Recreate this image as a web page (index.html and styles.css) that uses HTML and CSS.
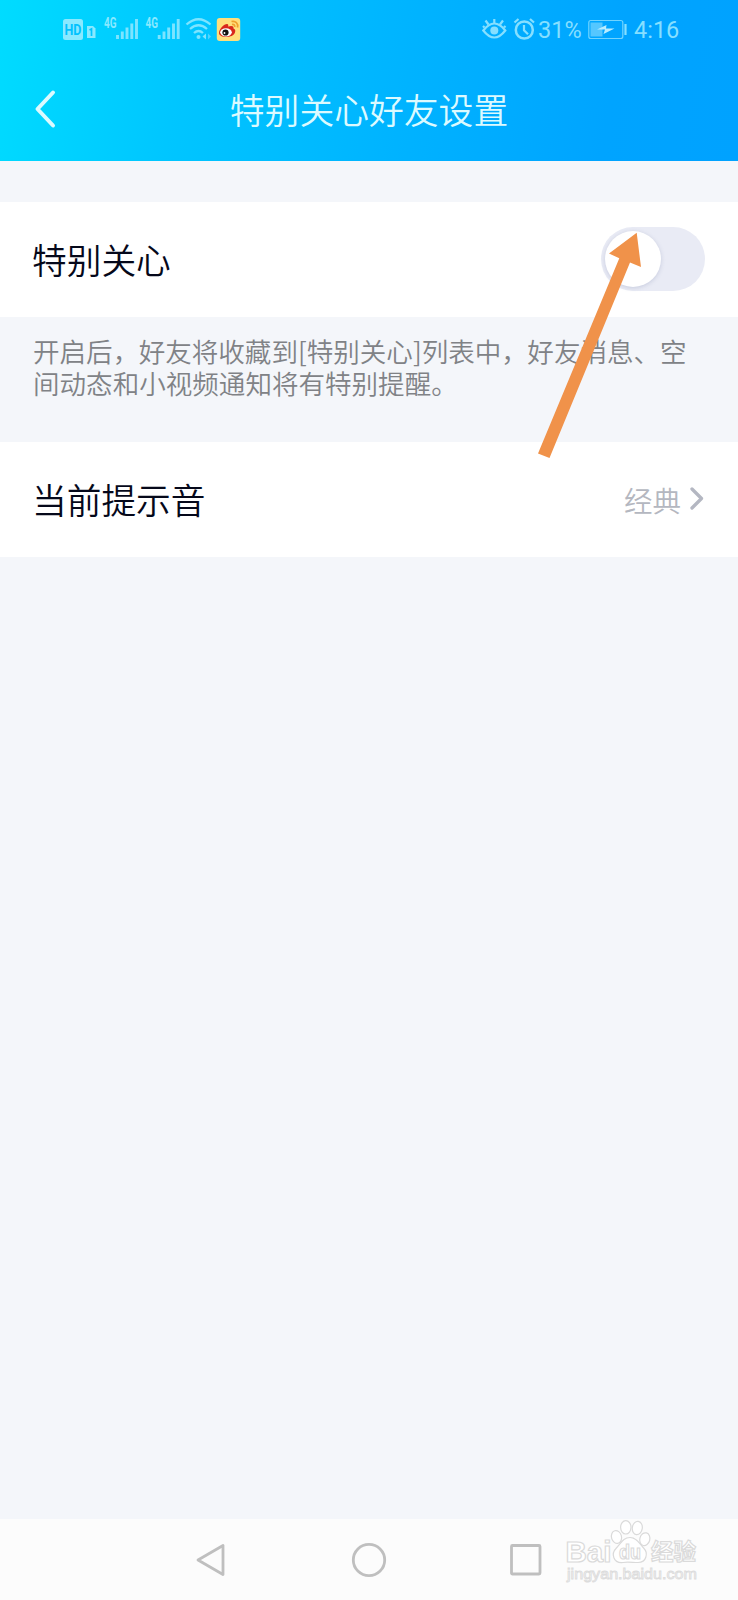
FILE: index.html
```html
<!DOCTYPE html>
<html lang="zh-CN">
<head>
<meta charset="utf-8">
<title>特别关心好友设置</title>
<link rel="stylesheet" href="styles.css">
</head>
<body>
<div class="screen">
  <header class="header">
    <div class="status">
      <svg class="status-left" width="180" height="28" viewBox="62 15 180 28">
        <rect x="63" y="19" width="20" height="21" rx="2.5" fill="#8ae9ff"/>
        <text x="73" y="34.500" class="hd" textLength="17" lengthAdjust="spacingAndGlyphs">HD</text>
        <path d="M87 26h6l2.500 2.500V38h-8.500z" fill="#8ae9ff"/>
        <path d="M89.500 30l2-1v7" fill="none" stroke="#00c5ff" stroke-width="1.700"/>
        <text x="104" y="28" class="net" textLength="12.500" lengthAdjust="spacingAndGlyphs">4G</text>
        <path d="M117.500 39v-4M122.300 39v-7.500M127 39v-11.500M131.800 39v-15.500M136.500 39v-20" class="bars"/>
        <text x="145.500" y="28" class="net" textLength="12.500" lengthAdjust="spacingAndGlyphs">4G</text>
        <path d="M159.200 39v-4M164 39v-7.500M168.700 39v-11.500M173.500 39v-15.500M178.200 39v-20" class="bars"/>
        <g fill="none" stroke="#7de4ff" stroke-width="2.300">
          <path d="M186.500 24.500q12-10.500 24 0M190 29q8.500-7.500 17 0M194 33q4.500-4 9 0"/>
        </g>
        <circle cx="198.500" cy="37" r="2" fill="#7de4ff"/>
        <path d="M206 33.500v6l-3.500-3z" fill="#7de4ff"/>
        <path d="M208 33.500v6l3-3z" fill="#4fd3ff"/>
        <rect x="216.800" y="18" width="23.400" height="23" rx="3" fill="#ffdf7c"/>
        <path d="M219 33c0-4 5-9 8-9 1.500 0 1.500 1.500 1 2.500 3-1 6-1 5.500 2 2 .7 2 2 1.500 4-1 3-5 4.500-8.500 4.500-4 0-7.500-1.500-7.500-4z" fill="#d9281c"/>
        <ellipse cx="226" cy="32.300" rx="5.800" ry="4.100" fill="#fff"/>
        <circle cx="225.500" cy="32.500" r="3.100" fill="#111"/>
        <circle cx="224.500" cy="33" r=".9" fill="#fff"/>
        <path d="M231.500 21.500c4-1 7 2 6 6M232 24.500c2-.3 3 .7 2.700 2.500" fill="none" stroke="#f0a02c" stroke-width="1.700"/>
      </svg>
      <div class="status-right">
        <svg width="54" height="26" viewBox="482 16 54 26" fill="none" stroke="#86dfff" stroke-width="2.200">
          <path d="M483.300 30.500q11-14 22 0q-11 14-22 0z"/>
          <circle cx="494.300" cy="30.500" r="4" fill="#86dfff" stroke="none"/>
          <path d="M494.300 23.500v-4.500M488.500 24.500l-3-4M500 24.500l3-4M484.500 27.500l-1.500-1.500M504 27.500l1.500-1.500"/>
          <circle cx="524.300" cy="30" r="8.500" stroke-width="2.500"/>
          <path d="M524 25v5.300l4 4M514.500 22.500l4-3.500M534 22.500l-4-3.500"/>
        </svg>
        <span class="percent">31%</span>
        <svg class="battery" width="40" height="26" viewBox="588 16 40 26">
          <rect x="588.800" y="20.500" width="34" height="18" rx="2" fill="none" stroke="#70d4ff" stroke-width="1.200"/>
          <rect x="590.500" y="22.500" width="12" height="14" fill="#55c7ff"/>
          <path d="M597 29.500l9.500-4.500-.5 3.500h8.500l-11 5.500 1.500-4.500z" fill="#b9ecff"/>
          <path d="M625.500 24v11" stroke="#86dfff" stroke-width="2.200"/>
        </svg>
        <span class="clock">4:16</span>
      </div>
    </div>
    <div class="titlebar">
      <svg class="back" width="24" height="40" viewBox="34 89 24 40" fill="none" stroke="#dcfaff" stroke-width="4" stroke-linecap="round" stroke-linejoin="round"><path d="M53 92.500L37.500 109 53 125.500"/></svg>
      <h1 class="title">特别关心好友设置</h1>
    </div>
  </header>
  <main class="content">
    <div class="row">
      <span class="label">特别关心</span>
      <span class="switch"><span class="knob"></span></span>
    </div>
    <p class="tip">开启后<span class="comma">，</span>好友将收藏到[特别关心]列表中<span class="comma">，</span>好友消息、空<br>间动态和小视频通知将有特别提醒。</p>
    <div class="row">
      <span class="label">当前提示音</span>
      <span class="value">经典
        <svg class="chevron" width="16" height="26" viewBox="0 0 16 26" fill="none" stroke="#b4b7c2" stroke-width="3.300" stroke-linecap="round" stroke-linejoin="round"><path d="M3 3L12.500 12.500 3 22"/></svg>
      </span>
    </div>
  </main>
  <nav class="nav">
    <svg width="34" height="36" viewBox="0 0 34 36"><path d="M4 18L29 3.500v29z"/></svg>
    <svg width="36" height="36" viewBox="0 0 36 36"><circle cx="18" cy="18" r="15.700"/></svg>
    <svg width="34" height="36" viewBox="0 0 34 36"><rect x="2.500" y="3.500" width="28.500" height="28.500" rx="1"/></svg>
  </nav>
  <svg class="watermark" width="140" height="70" viewBox="562 1518 140 70">
    <g fill="#fff" stroke="#dadada" stroke-width="1.200">
      <text x="565.500" y="1562" class="wm-name" textLength="46" lengthAdjust="spacingAndGlyphs">Bai</text>
      <ellipse cx="616.500" cy="1537" rx="5" ry="6.500" transform="rotate(-15 616.500 1537)"/>
      <ellipse cx="625.800" cy="1527.300" rx="5.200" ry="6.700"/>
      <ellipse cx="637.300" cy="1528" rx="5" ry="6.700" transform="rotate(8 637.300 1528)"/>
      <ellipse cx="644.800" cy="1539.200" rx="5" ry="6.500" transform="rotate(15 644.800 1539.200)"/>
      <path d="M630 1537.500c7 0 10 7 14 11s3 14-6 14c-5 0-11-1-15 0-10 1-12-9-7-14s7-11 14-11z"/>
      <text x="619" y="1559" class="wm-du" textLength="22" lengthAdjust="spacingAndGlyphs">du</text>
      <text x="651" y="1560" class="wm-cn" textLength="45" lengthAdjust="spacingAndGlyphs">经验</text>
    </g>
    <text x="567" y="1579" class="wm-url" textLength="130" lengthAdjust="spacingAndGlyphs">jingyan.baidu.com</text>
  </svg>
  <svg class="arrow" width="106" height="228" viewBox="537 231 106 228"><path d="M636.700 232.700L641 267 630 262.500 549.500 458 538 453.500 619.300 258.300 609 253.500z" fill="#f0924a"/></svg>
</div>
</body>
</html>
```
FILE: styles.css
```css
* { box-sizing: border-box; }
body { margin: 0; font-family: "Noto Sans CJK SC", sans-serif; font-weight: 350; }
.screen {
  position: relative;
  display: flex;
  flex-direction: column;
  width: 738px;
  height: 1600px;
  overflow: hidden;
  background: #f4f6fa;
}
.header {
  height: 161px;
  background: linear-gradient(100deg, #00dcff 0%, #00c6ff 25%, #00b3ff 55%, #00a4ff 82%, #00a2ff 100%);
}
.status {
  display: flex;
  justify-content: space-between;
  align-items: center;
  height: 58px;
  padding: 0 59px 0 62px;
}
.status-right {
  display: flex;
  align-items: center;
  color: #86dfff;
  font: 400 23.500px/28px Roboto, sans-serif;
}
.percent { margin-left: 2px; width: 50px; padding-top: 2px; }
.battery { margin-right: 6px; }
.clock { width: 45px; padding-top: 2px; }
.hd { font: 700 14.500px Roboto, sans-serif; fill: #00c2ff; text-anchor: middle; }
.net { font: 700 14px Roboto, sans-serif; fill: #8ae9ff; }
.bars { fill: none; stroke: #7de4ff; stroke-width: 2.900; }
.titlebar {
  display: grid;
  grid-template-columns: 24px 1fr 24px;
  align-items: center;
  height: 102px;
  padding: 0 34px;
}
.title {
  margin: 0;
  text-align: center;
  font-size: 34.800px;
  line-height: 50px;
  font-weight: 350;
  color: #dcfaff;
}
.content { flex: 1; padding-top: 41px; }
.row {
  display: flex;
  align-items: center;
  justify-content: space-between;
  height: 115px;
  padding: 0 33px;
  background: #fff;
}
.label { margin-left: -1px; font-size: 34.700px; line-height: 50px; color: #05081a; padding-bottom: 2px; }
.switch {
  width: 104px;
  height: 64px;
  margin-bottom: 2px;
  padding: 4px;
  border-radius: 32px;
  background: #e9ebf5;
}
.knob {
  display: block;
  width: 56px;
  height: 56px;
  border-radius: 50%;
  background: #fff;
  box-shadow: 0 1px 4px rgba(120, 130, 170, .3);
}
.tip {
  margin: 0;
  height: 125px;
  padding: 18px 33px 0;
  font-size: 26.550px;
  line-height: 32px;
  white-space: nowrap;
  color: #808286;
}
.comma { display: inline-block; width: 26px; }
.value { display: flex; align-items: center; gap: 8px; padding-bottom: 1px; font-size: 28.500px; color: #b4b7c0; }
.nav {
  display: flex;
  align-items: center;
  justify-content: space-between;
  height: 81px;
  padding: 0 195px 0 194px;
  background: #fcfcfc;
}
.nav svg { fill: none; stroke: #bfbfbf; stroke-width: 2.800; stroke-linejoin: round; }
.watermark { position: absolute; left: 562px; top: 1518px; }
.wm-name { font: 700 30px "Liberation Sans", sans-serif; }
.wm-du { font: 700 21px "Liberation Sans", sans-serif; }
.wm-cn { font: 700 23px "Noto Sans CJK SC", sans-serif; }
.wm-url { font: 400 15px "Liberation Sans", sans-serif; fill: #fff; stroke: #dcdcdc; stroke-width: .9; }
.arrow { position: absolute; left: 537px; top: 231px; }
```
